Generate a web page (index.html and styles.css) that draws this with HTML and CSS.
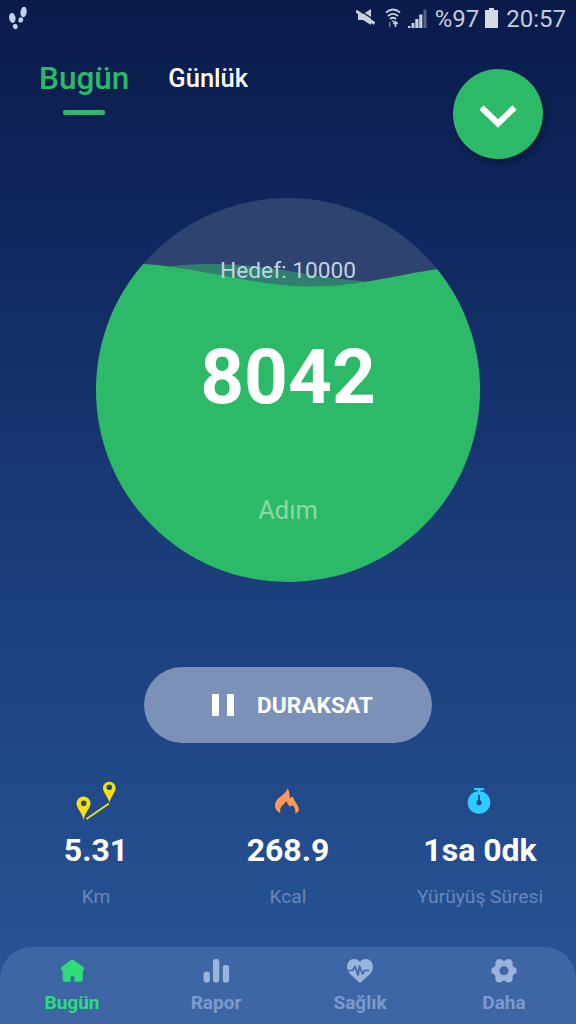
FILE: index.html
```html
<!DOCTYPE html>
<html lang="tr">

<head>
    <meta charset="UTF-8">
    <meta name="viewport" content="width=device-width, initial-scale=1.0">
    <title>Adım Sayar</title>
    <link rel="stylesheet" href="styles.css">
</head>

<body>
    <div class="app">
        <div class="status-bar">
            <svg class="steps-icon" width="20" height="26" viewBox="0 0 20 26" fill="#c5d2ee">
                <ellipse cx="4.3" cy="13" rx="3.2" ry="5" transform="rotate(-8 4.3 13)" />
                <ellipse cx="7.2" cy="21.5" rx="2.4" ry="2.7" transform="rotate(-15 7.2 21.5)" />
                <ellipse cx="15.6" cy="7" rx="3.1" ry="5.2" transform="rotate(8 15.6 7)" />
                <ellipse cx="12.8" cy="15" rx="2.4" ry="2.7" transform="rotate(15 12.8 15)" />
            </svg>
            <div class="status-right">
                <svg class="mute-icon" width="20" height="20" viewBox="0 0 20 20">
                    <path d="M2 6h5l8-5v16l-8-5H2z" fill="#c8cfdf" />
                    <path d="M1 0.500l18 12" stroke="#0a1d4e" stroke-width="1.500" />
                    <path d="M0 3l18.500 12.500" stroke="#c8cfdf" stroke-width="3" />
                </svg>
                <svg class="wifi-icon" width="16" height="20" viewBox="0 0 16 20" fill="none" stroke="#c8cfdf" stroke-width="1.7">
                    <path d="M1 4.5q7-6 14 0M3 8q5-4.2 10 0M5 11q3-2.5 6 0" />
                    <path d="M6.3 12.4h3.4L8 14.4z" fill="#c8cfdf" stroke="none" />
                    <path d="M4.7 14v5" stroke="#66738f" />
                    <path d="M10.5 19v-5M8.3 16l2.2-2.2 2.2 2.2" />
                </svg>
                <svg class="signal-icon" width="19" height="20" viewBox="0 0 19 20" fill="#c8cfdf">
                    <path d="M0 18h2.500v2H0zM3.500 15h3v5h-3zM7.300 11h3.200v9H7.300zM11.200 6.500h3.200V20h-3.200z" />
                    <path d="M15.500 1.500h3V20h-3z" opacity=".4" />
                </svg>
                <span class="battery-text">%97</span>
                <svg class="battery-icon" width="13" height="20" viewBox="0 0 13 20" fill="#d5dae5">
                    <path d="M4 0h5v2h4v18H0V2h4z" />
                </svg>
                <span class="clock">20:57</span>
            </div>
        </div>

        <header class="header">
            <nav class="tabs">
                <a class="tab active">Bugün</a>
                <a class="tab">Günlük</a>
            </nav>
            <button class="fab">
                <svg width="40" height="26" viewBox="0 0 40 26" fill="none" stroke="#fff" stroke-width="6">
                    <path d="M3.500 3.500L20 19.500L36.500 3.500" />
                </svg>
            </button>
        </header>

        <main class="ring">
            <svg class="wave" width="384" height="384" viewBox="0 0 384 384">
                <path d="M48 72C90 65 125 65 155 68C195 72 230 81 275 84L215 94L74 76z" fill="#30806f" />
                <path d="M0 63L48 66C75 68 95 72 124 77C155 83 185 88.500 216 88.500C262 88.500 300 77 342 71L384 66V384H0z" fill="#2dba68" />
            </svg>
            <div class="ring-content">
                <span class="goal">Hedef: 10000</span>
                <span class="count">8042</span>
                <span class="unit">Adım</span>
            </div>
        </main>

        <button class="pause">
            <svg width="22" height="22" viewBox="0 0 22 22" fill="#fff">
                <path d="M0 0h7v22H0zM15 0h7v22h-7z" />
            </svg>
            <span>DURAKSAT</span>
        </button>

        <section class="stats">
            <div class="stat">
                <svg width="40" height="40" viewBox="0 0 40 40" fill="#f7e111">
                    <path fill-rule="evenodd" d="M7.500 39C6 31 0.500 27.500 0.500 22.500a7 7 0 0 1 14 0C14.500 27.500 9 31 7.500 39zM7.700 19.500a2.800 2.800 0 1 0 0 5.600a2.800 2.800 0 1 0 0-5.600z" />
                    <path fill-rule="evenodd" d="M33.500 21.500C31.500 15 27 11.500 27 7a6.300 6.300 0 0 1 12.600 0C39.600 11.500 35 15 33.500 21.500zM33.300 3.500a2.800 2.800 0 1 0 0 5.600a2.800 2.800 0 1 0 0-5.600z" />
                    <path d="M10.500 38L33 22.500" stroke="#f7e111" stroke-width="1.700" />
                </svg>
                <span class="value">5.31</span>
                <span class="label">Km</span>
            </div>
            <div class="stat">
                <svg width="40" height="40" viewBox="0 0 40 40" fill="#ff9955">
                    <path d="M12.500 32C8.500 30.500 6.500 27 7.200 22.500C8.500 16.500 17.500 14 19.600 7.500C21.500 10.500 21.800 13.500 21.500 17L25 15.500C25.500 20 31 24 31 29C30.500 31 29 32 27 32.500C28 29.500 27 26.500 25 24.500L21.500 25.500L18 20C16.500 23.500 10.500 26 12.500 32z" />
                </svg>
                <span class="value">268.9</span>
                <span class="label">Kcal</span>
            </div>
            <div class="stat">
                <svg width="40" height="40" viewBox="0 0 40 40">
                    <path d="M14 7h10v2.200h-3.700V12h-2.600V9.200H14z" fill="#2fccff" />
                    <circle cx="19" cy="21.500" r="11.300" fill="#2fccff" />
                    <circle cx="19" cy="21.700" r="2.600" fill="#164c8c" />
                    <path d="M19 14v8" stroke="#164c8c" stroke-width="1.800" />
                </svg>
                <span class="value">1sa 0dk</span>
                <span class="label">Yürüyüş Süresi</span>
            </div>
        </section>

        <nav class="bottom-nav">
            <a class="nav-item active">
                <svg width="28" height="28" viewBox="0 0 28 28" fill="currentColor">
                    <path d="M15.500 4L25.500 11Q27 13.500 24.800 14.500V23.500Q24.800 25.700 22.500 25.700H16.500V21.500Q16.500 20 14.500 20T12.500 21.500V25.700H7Q4.700 25.700 4.700 23.500V14.500Q1.800 13.500 3.500 11L13 4Q14.200 3 15.500 4z" />
                </svg>
                <span>Bugün</span>
            </a>
            <a class="nav-item">
                <svg width="28" height="28" viewBox="0 0 28 28" fill="currentColor">
                    <rect x="1.500" y="15.500" width="6.300" height="11" rx="2.800" />
                    <rect x="11" y="3" width="6.300" height="23.500" rx="2.800" />
                    <rect x="20.800" y="9" width="6.300" height="17.500" rx="2.800" />
                </svg>
                <span>Rapor</span>
            </a>
            <a class="nav-item">
                <svg width="28" height="28" viewBox="0 0 28 28" fill="currentColor">
                    <path d="M14 27L4 18C-2 11 2 3 8 3Q12 3 14 6Q16 3 20 3C26 3 30 11 24 18z" />
                    <path d="M1 14.500h5.500l2.500-4 3 8.500 1.500-9 3 8 2-3.500H23" fill="none" stroke="#4567a4" stroke-width="1.700" stroke-linejoin="round" />
                </svg>
                <span>Sağlık</span>
            </a>
            <a class="nav-item">
                <svg width="28" height="28" viewBox="0 0 28 28" fill="currentColor">
                    <path fill-rule="evenodd" stroke="currentColor" stroke-width="1.500" stroke-linejoin="round" d="M7.500 4H11L12.500 5.500H15.500L17 4H20.500L22 7L21.700 9L23 11.500L25.700 13V16.500L23 18L21.700 20L22 23L20.500 25.500H17L15.500 24H12.500L11 25.500H7.500L6 23L6.300 20L5 18L2.300 16.500V13L5 11.500L6.300 9L6 7zM14 9.400a5.300 5.300 0 1 0 0 10.600a5.300 5.300 0 1 0 0-10.600z" />
                </svg>
                <span>Daha</span>
            </a>
        </nav>
    </div>
</body>

</html>
```

FILE: styles.css
```css
* {
    box-sizing: border-box;
}

body {
    margin: 0;
    font-family: Roboto, "Noto Sans", sans-serif;
    color: #fff;
}

svg {
    display: block;
    flex: none;
}

button {
    padding: 0;
    border: none;
    font: inherit;
    color: inherit;
}

.app {
    display: flex;
    flex-direction: column;
    align-items: center;
    width: 576px;
    height: 1024px;
    overflow: hidden;
    background: linear-gradient(#0a1b4b 0%, #112960 25%, #193a77 50%, #214887 75%, #285799 100%);
}

/* status bar */
.status-bar {
    display: flex;
    justify-content: space-between;
    width: 100%;
    height: 38px;
    padding: 0 10px 0 8px;
}

.steps-icon {
    margin-top: 5px;
}

.status-right {
    display: flex;
    align-items: center;
    color: #c5ccdc;
    font-size: 24px;
    line-height: 40px;
}

.mute-icon,
.wifi-icon,
.signal-icon,
.battery-icon {
    margin-bottom: 2px;
}

.wifi-icon {
    margin-left: 9px;
}

.signal-icon {
    margin-left: 7px;
}

.battery-text {
    margin-left: 8px;
}

.battery-icon {
    margin-left: 6px;
    margin-right: 8px;
}

/* header */
.header {
    display: flex;
    justify-content: space-between;
    align-items: flex-start;
    width: 100%;
    height: 160px;
    padding: 0 33px 0 39px;
}

.tabs {
    display: flex;
    align-items: flex-start;
    gap: 39px;
    padding-top: 22px;
}

.tab {
    font-size: 25.5px;
    font-weight: 500;
    line-height: 36px;
}

.tab.active {
    display: flex;
    flex-direction: column;
    align-items: center;
    font-size: 31.5px;
    line-height: 38px;
    color: #2dba68;
}

.tab.active::after {
    content: "";
    width: 42px;
    height: 5px;
    margin-top: 12px;
    border-radius: 2px;
    background: #35b56d;
}

.fab {
    display: flex;
    justify-content: center;
    align-items: center;
    width: 90px;
    height: 90px;
    margin-top: 31px;
    padding-top: 5px;
    border-radius: 50%;
    background: #2dba68;
    box-shadow: 2px 4px 6px rgba(0, 0, 0, 0.35);
}

/* progress */
.ring {
    display: grid;
    width: 384px;
    height: 384px;
    border-radius: 50%;
    overflow: hidden;
    background: #2e436f;
}

.wave,
.ring-content {
    grid-area: 1 / 1;
}

.ring-content {
    z-index: 1;
    display: flex;
    flex-direction: column;
    align-items: center;
}

.goal {
    margin-top: 58px;
    font-size: 22.7px;
    line-height: 30px;
    color: #c2d3e1;
}

.count {
    margin-top: 46px;
    font-size: 76.5px;
    font-weight: 700;
    line-height: 90px;
}

.unit {
    margin-top: 73px;
    font-size: 25.5px;
    line-height: 30px;
    color: #8dd8a9;
}

.pause {
    display: flex;
    align-items: center;
    gap: 23px;
    width: 288px;
    height: 76px;
    margin-top: 85px;
    padding-left: 68px;
    border-radius: 38px;
    background: #7b91b7;
    font-size: 22.7px;
    font-weight: 700;
}

.pause span {
    padding-top: 1px;
}

/* stats */
.stats {
    display: grid;
    grid-template-columns: repeat(3, 192px);
    margin-top: 38px;
}

.stat {
    display: flex;
    flex-direction: column;
    align-items: center;
}

.value {
    margin-top: 9px;
    font-size: 32px;
    font-weight: 700;
    line-height: 40px;
}

.label {
    margin-top: 15px;
    font-size: 19.2px;
    line-height: 24px;
    color: #6986b8;
}

/* bottom navigation */
.bottom-nav {
    display: grid;
    grid-template-columns: repeat(4, 1fr);
    width: 100%;
    height: 77px;
    margin-top: auto;
    padding-top: 9px;
    border-radius: 32px 32px 0 0;
    background: #3e66a5;
}

.nav-item {
    display: flex;
    flex-direction: column;
    align-items: center;
    color: #9bb4dc;
    font-size: 19px;
    font-weight: 700;
    line-height: 24px;
}

.nav-item span {
    margin-top: 7px;
    color: #7c9bcc;
}

.nav-item.active,
.nav-item.active span {
    color: #2ddd77;
}
```
